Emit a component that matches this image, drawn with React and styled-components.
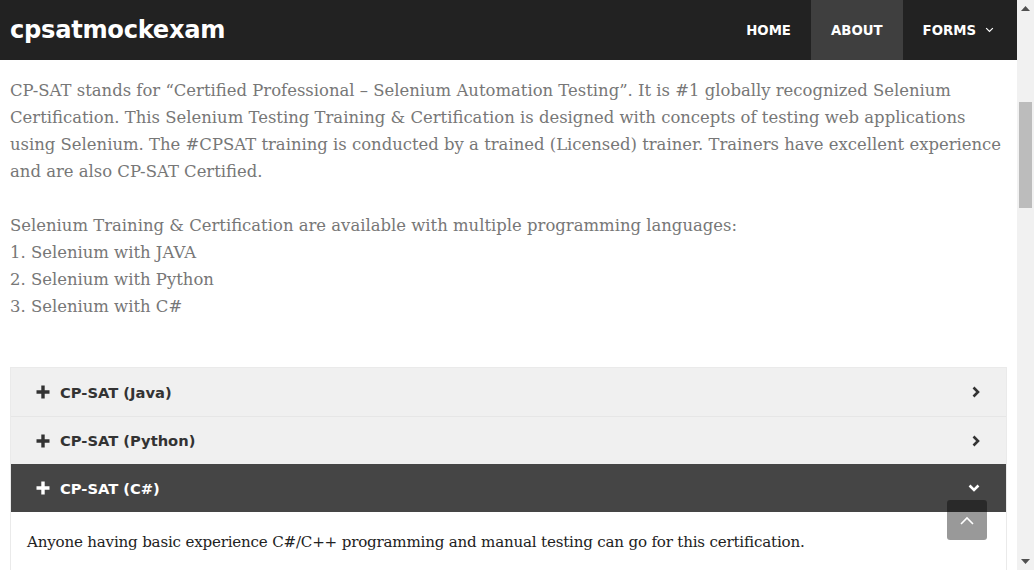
import React from "react";
import styled, { createGlobalStyle } from "styled-components";

const Global = createGlobalStyle`
  html, body { margin: 0; padding: 0; height: 100%; overflow: hidden; background: #fff; }
  #root { height: 100%; }
  * { box-sizing: border-box; }
`;

const Shell = styled.div`
  display: flex;
  width: 1034px;
  height: 570px;
  overflow: hidden;
`;

const Page = styled.div`
  flex: 1;
  display: flex;
  flex-direction: column;
  min-width: 0;
  position: relative;
`;

const Header = styled.header`
  height: 60px;
  background: #222222;
  display: flex;
  align-items: center;
  justify-content: space-between;
  padding-left: 10px;
  flex-shrink: 0;
`;

const Logo = styled.div`
  font-family: "DejaVu Sans", sans-serif;
  font-weight: bold;
  font-size: 24.2px;
  color: #fff;
  letter-spacing: -0.3px;
`;

const Nav = styled.nav`
  display: flex;
  height: 100%;
`;

const NavItem = styled.a`
  display: flex;
  align-items: center;
  gap: 9px;
  height: 100%;
  padding: 0 20px;
  font-family: "DejaVu Sans", sans-serif;
  font-weight: bold;
  font-size: 13.3px;
  color: #fff;
  background: ${(p) => (p.$active ? "#3f3f3f" : "transparent")};
  padding-right: ${(p) => (p.$menu ? "23px" : "20px")};
`;

const Content = styled.main`
  padding: 17px 10px 0 10px;
  font-family: "DejaVu Serif", serif;
  font-size: 16.45px;
  line-height: 27px;
  color: #777;
`;

const Para = styled.p`
  margin: 0 0 27px 0;
`;

const Accordion = styled.div`
  margin-top: 47px;
  border: 1px solid #eaeaea;
  border-bottom: none;
`;

const Item = styled.div`
  height: 48px;
  display: flex;
  align-items: center;
  padding: 0 26px 0 25px;
  background: ${(p) => (p.$open ? "#454545" : "#f0f0f0")};
  color: ${(p) => (p.$open ? "#fff" : "#333")};
  border-top: ${(p) => (p.$first ? "none" : p.$open ? "none" : "1px solid #e6e6e6")};
  font-family: "DejaVu Sans", sans-serif;
  font-weight: bold;
  font-size: 14.7px;
`;

const Title = styled.span`
  flex: 1;
  margin-left: 10px;
`;

const Panel = styled.div`
  background: #fff;
  padding: 20px 16px 20px 16px;
  font-family: "DejaVu Serif", serif;
  font-size: 15.1px;
  line-height: 20px;
  color: #222;
  letter-spacing: -0.2px;
  border-bottom: 1px solid #eaeaea;
`;

const ToTop = styled.div`
  position: absolute;
  left: 947px;
  top: 500px;
  width: 40px;
  height: 40px;
  border-radius: 3px;
  background: rgba(0, 0, 0, 0.4);
  display: flex;
  align-items: center;
  justify-content: center;
`;

const Scrollbar = styled.div`
  width: 17px;
  height: 570px;
  background: #f1f1f1;
  position: relative;
  flex-shrink: 0;
`;

const Thumb = styled.div`
  position: absolute;
  left: 2px;
  top: 102px;
  width: 13px;
  height: 106px;
  background: #bcbcbc;
`;

const Arrow = styled.div`
  position: absolute;
  left: 0;
  width: 17px;
  height: 17px;
  display: flex;
  align-items: center;
  justify-content: center;
  top: ${(p) => (p.$down ? "553px" : "0")};
`;

const Plus = ({ color }) => (
  <svg width="14" height="14" viewBox="0 0 14 14">
    <path d="M5.3 0.5h3.4v4.8h4.8v3.4H8.7v4.8H5.3V8.7H0.5V5.3h4.8z" fill={color} />
  </svg>
);

const ChevRight = () => (
  <svg width="8" height="12" viewBox="0 0 8 12">
    <path d="M1.5 1.5L6 6l-4.5 4.5" stroke="#333" strokeWidth="2.6" fill="none" />
  </svg>
);

const ChevDown = ({ color = "#fff", size = 12, w = 2.6 }) => (
  <svg width={size} height={size * 0.66} viewBox="0 0 12 8">
    <path d="M1.5 1.5L6 6l4.5-4.5" stroke={color} strokeWidth={w} fill="none" />
  </svg>
);

const items = ["CP-SAT (Java)", "CP-SAT (Python)", "CP-SAT (C#)"];

export default function App() {
  return (
    <>
      <Global />
      <Shell>
        <Page>
          <Header>
            <Logo>cpsatmockexam</Logo>
            <Nav>
              <NavItem>HOME</NavItem>
              <NavItem $active>ABOUT</NavItem>
              <NavItem $menu>
                FORMS
                <ChevDown color="#fff" size={9} w={1.6} />
              </NavItem>
            </Nav>
          </Header>
          <Content>
            <Para>
              CP-SAT stands for “Certified Professional – Selenium Automation Testing”. It is #1 globally recognized
              Selenium Certification. This Selenium Testing Training &amp; Certification is designed with concepts of
              testing web applications using Selenium. The #CPSAT training is conducted by a trained (Licensed)
              trainer. Trainers have excellent experience and are also CP-SAT Certified.
            </Para>
            <Para>
              Selenium Training &amp; Certification are available with multiple programming languages:
              <br />
              1. Selenium with JAVA
              <br />
              2. Selenium with Python
              <br />
              3. Selenium with C#
            </Para>
            <Accordion>
              {items.map((t, i) => {
                const open = i === 2;
                return (
                  <Item key={t} $open={open} $first={i === 0}>
                    <Plus color={open ? "#fff" : "#333"} />
                    <Title>{t}</Title>
                    {open ? <ChevDown /> : <ChevRight />}
                  </Item>
                );
              })}
              <Panel>Anyone having basic experience C#/C++ programming and manual testing can go for this certification.</Panel>
            </Accordion>
          </Content>
          <ToTop>
            <svg width="14" height="9" viewBox="0 0 14 9">
              <path d="M1 8l6-6 6 6" stroke="#fff" strokeWidth="1.6" fill="none" />
            </svg>
          </ToTop>
        </Page>
        <Scrollbar>
          <Arrow>
            <svg width="9" height="5" viewBox="0 0 9 5"><path d="M0 5h9L4.5 0z" fill="#505050" /></svg>
          </Arrow>
          <Thumb />
          <Arrow $down>
            <svg width="9" height="5" viewBox="0 0 9 5"><path d="M0 0h9L4.5 5z" fill="#505050" /></svg>
          </Arrow>
        </Scrollbar>
      </Shell>
    </>
  );
}
